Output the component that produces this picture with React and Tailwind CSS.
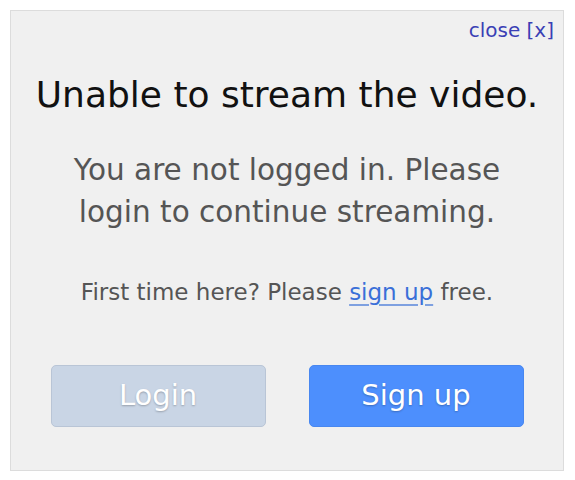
export default function App() {
  return (
    <div className="w-[575px] h-[480px] bg-white pt-[10px] pl-[10px]" style={{ fontFamily: '"DejaVu Sans", Verdana, sans-serif' }}>
      <div className="w-[554px] h-[461px] bg-[#f0f0f0] border border-[#dcdcdc] flex flex-col items-center">
        <div className="w-full flex justify-end pr-[9px] pt-[8px]">
          <a className="text-[20px] text-[#3a3fb5] leading-[22px] cursor-pointer">close [x]</a>
        </div>
        <h1 className="mt-[32px] text-[36px] leading-[44px] text-[#111] whitespace-nowrap">Unable to stream the video.</h1>
        <p className="mt-[32px] text-[29.5px] leading-[42px] text-[#555] text-center whitespace-nowrap">
          You are not logged in. Please
          <br />
          login to continue streaming.
        </p>
        <p className="mt-[46px] text-[23px] leading-[26px] text-[#555] whitespace-nowrap">
          First time here? Please{" "}
          <a className="text-[#3a6fd8] underline underline-offset-4 decoration-[#7ea0e0]">sign up</a> free.
        </p>
        <div className="mt-[60px] flex gap-[43px]">
          <button className="w-[215px] h-[62px] rounded-[5px] bg-[#c9d5e5] border border-[#b9c5d6] text-white text-[29px] [text-shadow:0_1px_2px_rgba(0,0,0,0.25)]">
            Login
          </button>
          <button className="w-[215px] h-[62px] rounded-[5px] bg-[#4d8ffd] border border-[#4887f0] text-white text-[29px] [text-shadow:0_1px_2px_rgba(0,0,0,0.25)]">
            Sign up
          </button>
        </div>
      </div>
    </div>
  );
}
